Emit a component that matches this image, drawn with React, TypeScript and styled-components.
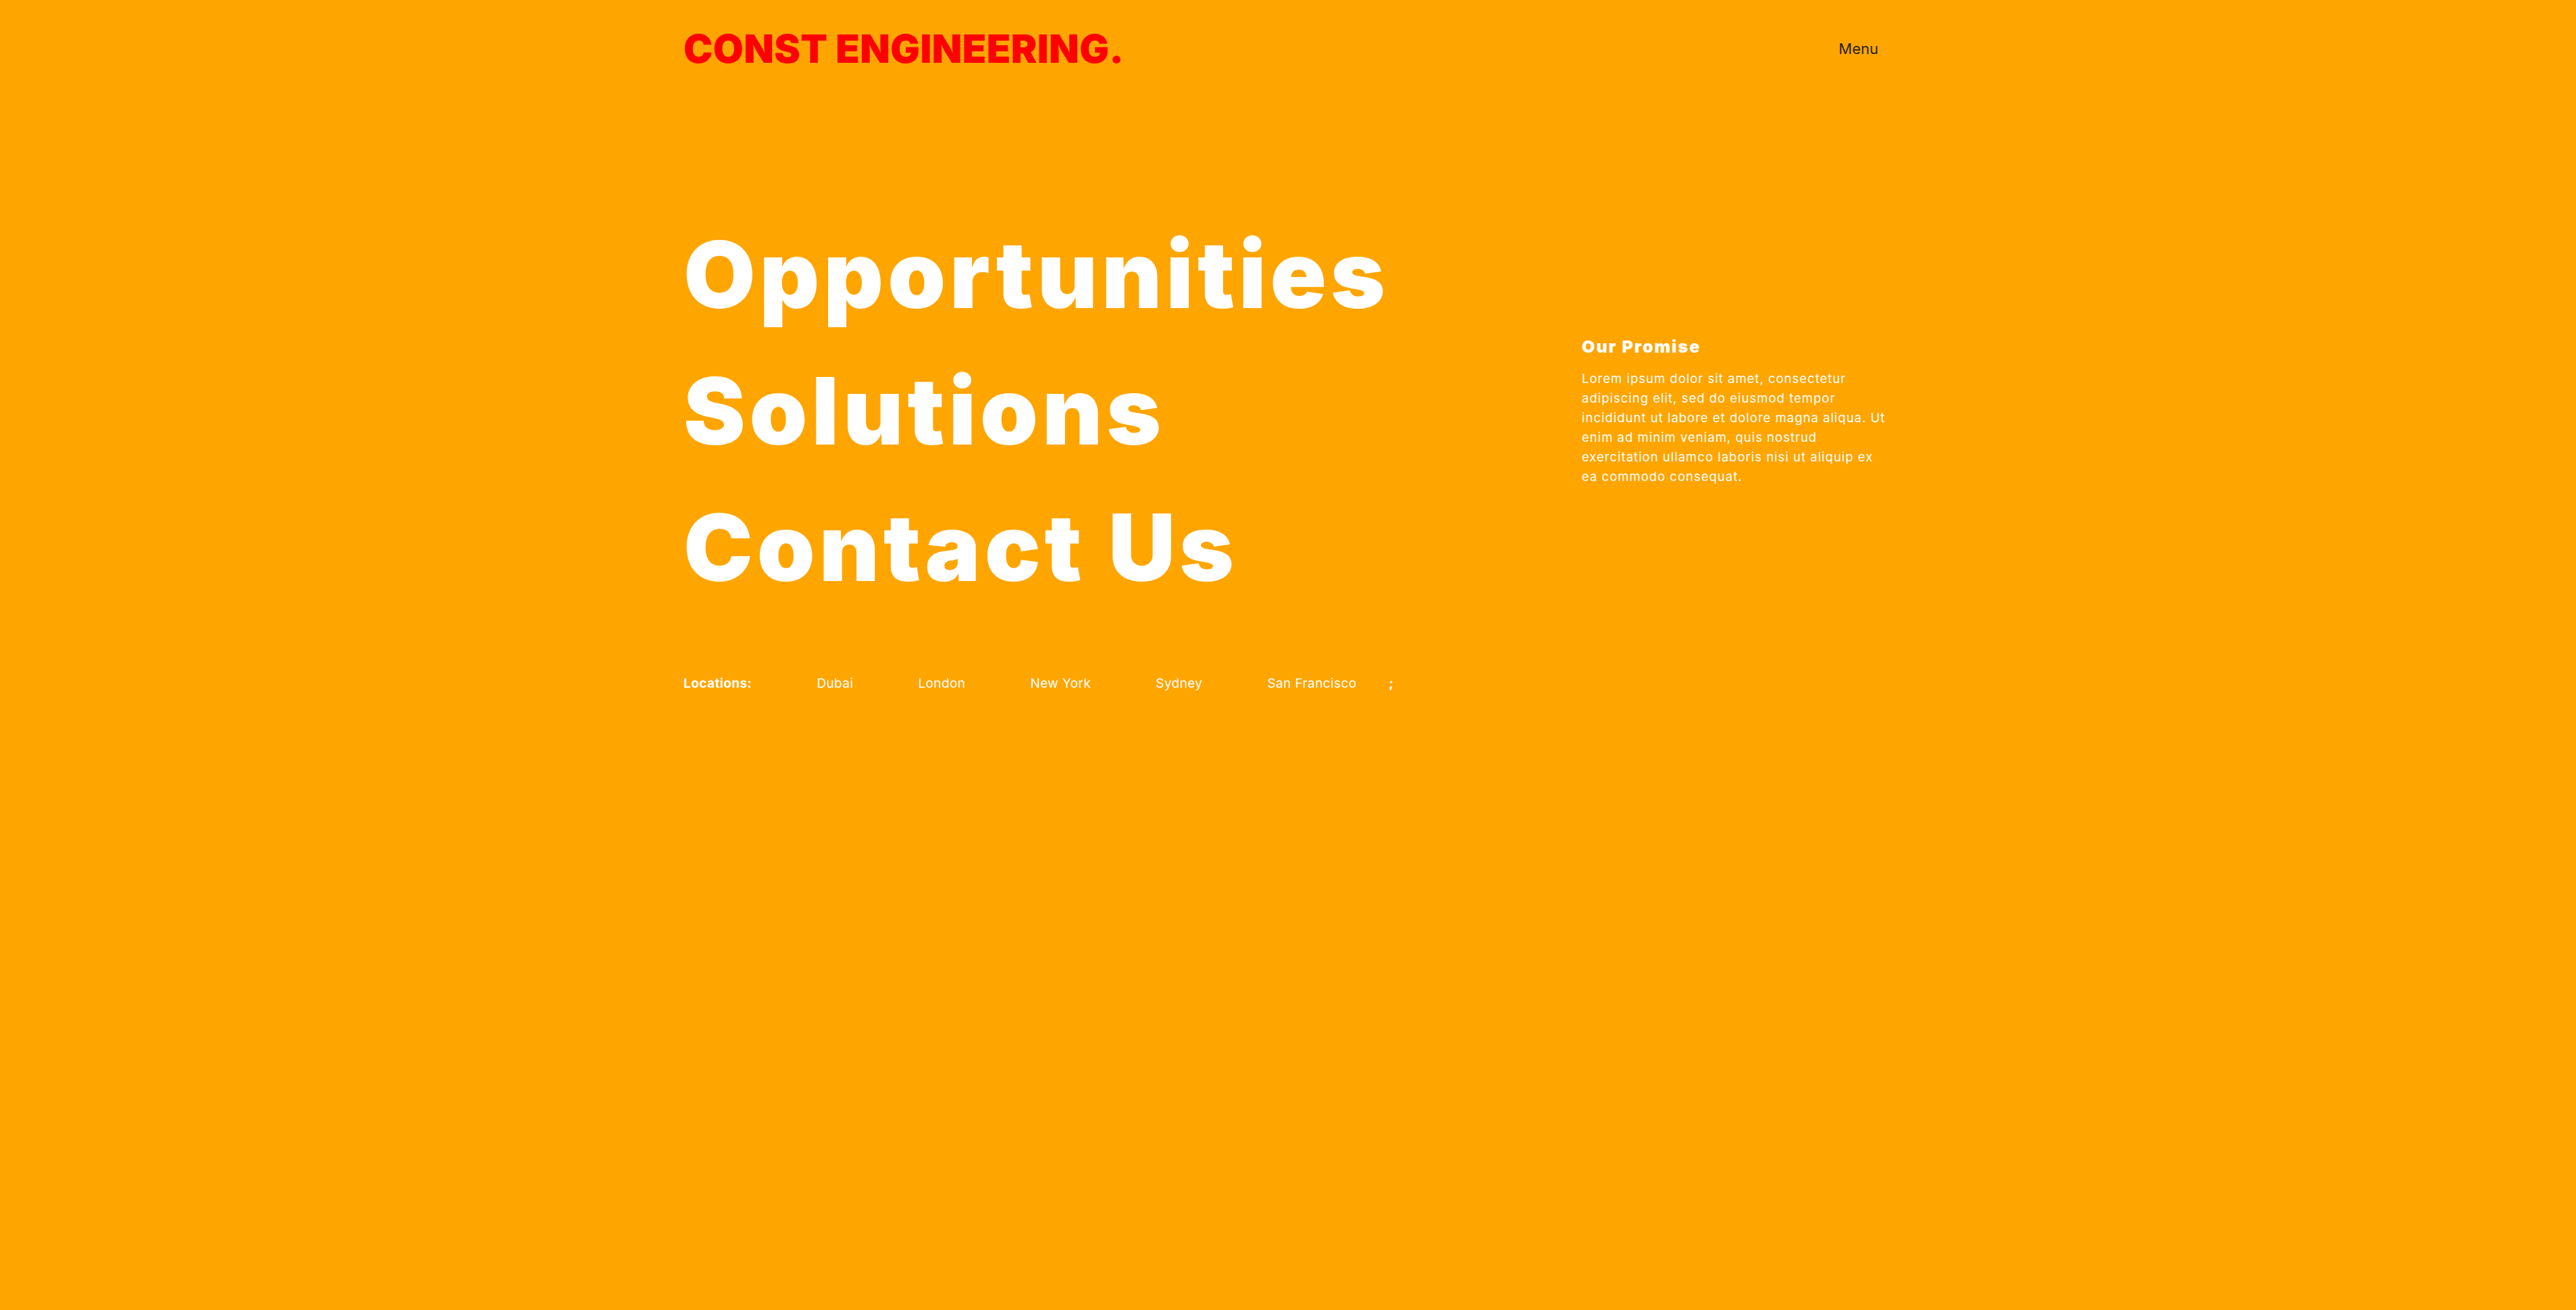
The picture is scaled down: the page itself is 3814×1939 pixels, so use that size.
import React from "react";
import styled, { createGlobalStyle } from "styled-components";

const GlobalStyle = createGlobalStyle`
  html, body {
    margin: 0;
    padding: 0;
    background: #ffa500;
  }
  body {
    font-family: Inter, "Liberation Sans", sans-serif;
  }
  * { box-sizing: border-box; }
`;

const Page = styled.div`
  min-height: 100vh;
  background: #ffa500;
`;

const Container = styled.div`
  width: 1790px;
  margin: 0 auto;
`;

const Header = styled.header`
  display: flex;
  justify-content: space-between;
  align-items: center;
  padding-top: 43px;
`;

const Logo = styled.div`
  font-family: Inter, sans-serif;
  font-weight: 900;
  font-size: 58px;
  line-height: 1;
  color: #ff0000;
  letter-spacing: 0.4px;
`;

const MenuButton = styled.button`
  background: none;
  border: none;
  padding: 0 21px 0 0;
  font-family: Inter, sans-serif;
  font-size: 22px;
  line-height: 1;
  color: #2a2418;
  cursor: pointer;
`;

const Hero = styled.section`
  display: flex;
  justify-content: space-between;
  align-items: center;
  margin-top: 204px;
`;

const NavList = styled.nav`
  display: flex;
  flex-direction: column;
`;

const NavLink = styled.a`
  font-family: Inter, sans-serif;
  font-weight: 900;
  font-size: 137.5px;
  line-height: 202px;
  color: #ffffff;
  text-decoration: none;
  letter-spacing: 6px;
`;

const Promise = styled.aside`
  width: 460px;
  color: #ffffff;
`;

const PromiseTitle = styled.h3`
  margin: 0 0 16px;
  font-family: Inter, sans-serif;
  font-weight: 900;
  font-size: 25px;
  line-height: 34.5px;
  letter-spacing: 2px;
`;

const PromiseText = styled.p`
  margin: 0;
  font-family: Inter, sans-serif;
  font-weight: 400;
  font-size: 18.5px;
  line-height: 29px;
  letter-spacing: 1px;
`;

const Locations = styled.div`
  display: flex;
  align-items: baseline;
  margin-top: 87px;
  color: #ffffff;
  font-family: Inter, sans-serif;
  font-size: 19px;
  line-height: 28.5px;
  letter-spacing: 0.4px;
`;

const LocationsLabel = styled.span`
  font-weight: 700;
`;

const CityList = styled.ul`
  display: flex;
  gap: 96px;
  list-style: none;
  margin: 0 0 0 96px;
  padding: 0;
`;

const City = styled.li`
  font-weight: 400;
`;

const Separator = styled.span`
  margin-left: 48px;
  font-weight: 700;
`;

const cities = ["Dubai", "London", "New York", "Sydney", "San Francisco"];

export default function App() {
  return (
    <Page>
      <GlobalStyle />
      <Container>
        <Header>
          <Logo>CONST ENGINEERING.</Logo>
          <MenuButton>Menu</MenuButton>
        </Header>
        <Hero>
          <NavList>
            <NavLink href="#">Opportunities</NavLink>
            <NavLink href="#">Solutions</NavLink>
            <NavLink href="#">Contact Us</NavLink>
          </NavList>
          <Promise>
            <PromiseTitle>Our Promise</PromiseTitle>
            <PromiseText>
              Lorem ipsum dolor sit amet, consectetur adipiscing elit, sed do
              eiusmod tempor incididunt ut labore et dolore magna aliqua. Ut
              enim ad minim veniam, quis nostrud exercitation ullamco laboris
              nisi ut aliquip ex ea commodo consequat.
            </PromiseText>
          </Promise>
        </Hero>
        <Locations>
          <LocationsLabel>Locations:</LocationsLabel>
          <CityList>
            {cities.map((c) => (
              <City key={c}>{c}</City>
            ))}
          </CityList>
          <Separator>;</Separator>
        </Locations>
      </Container>
    </Page>
  );
}
